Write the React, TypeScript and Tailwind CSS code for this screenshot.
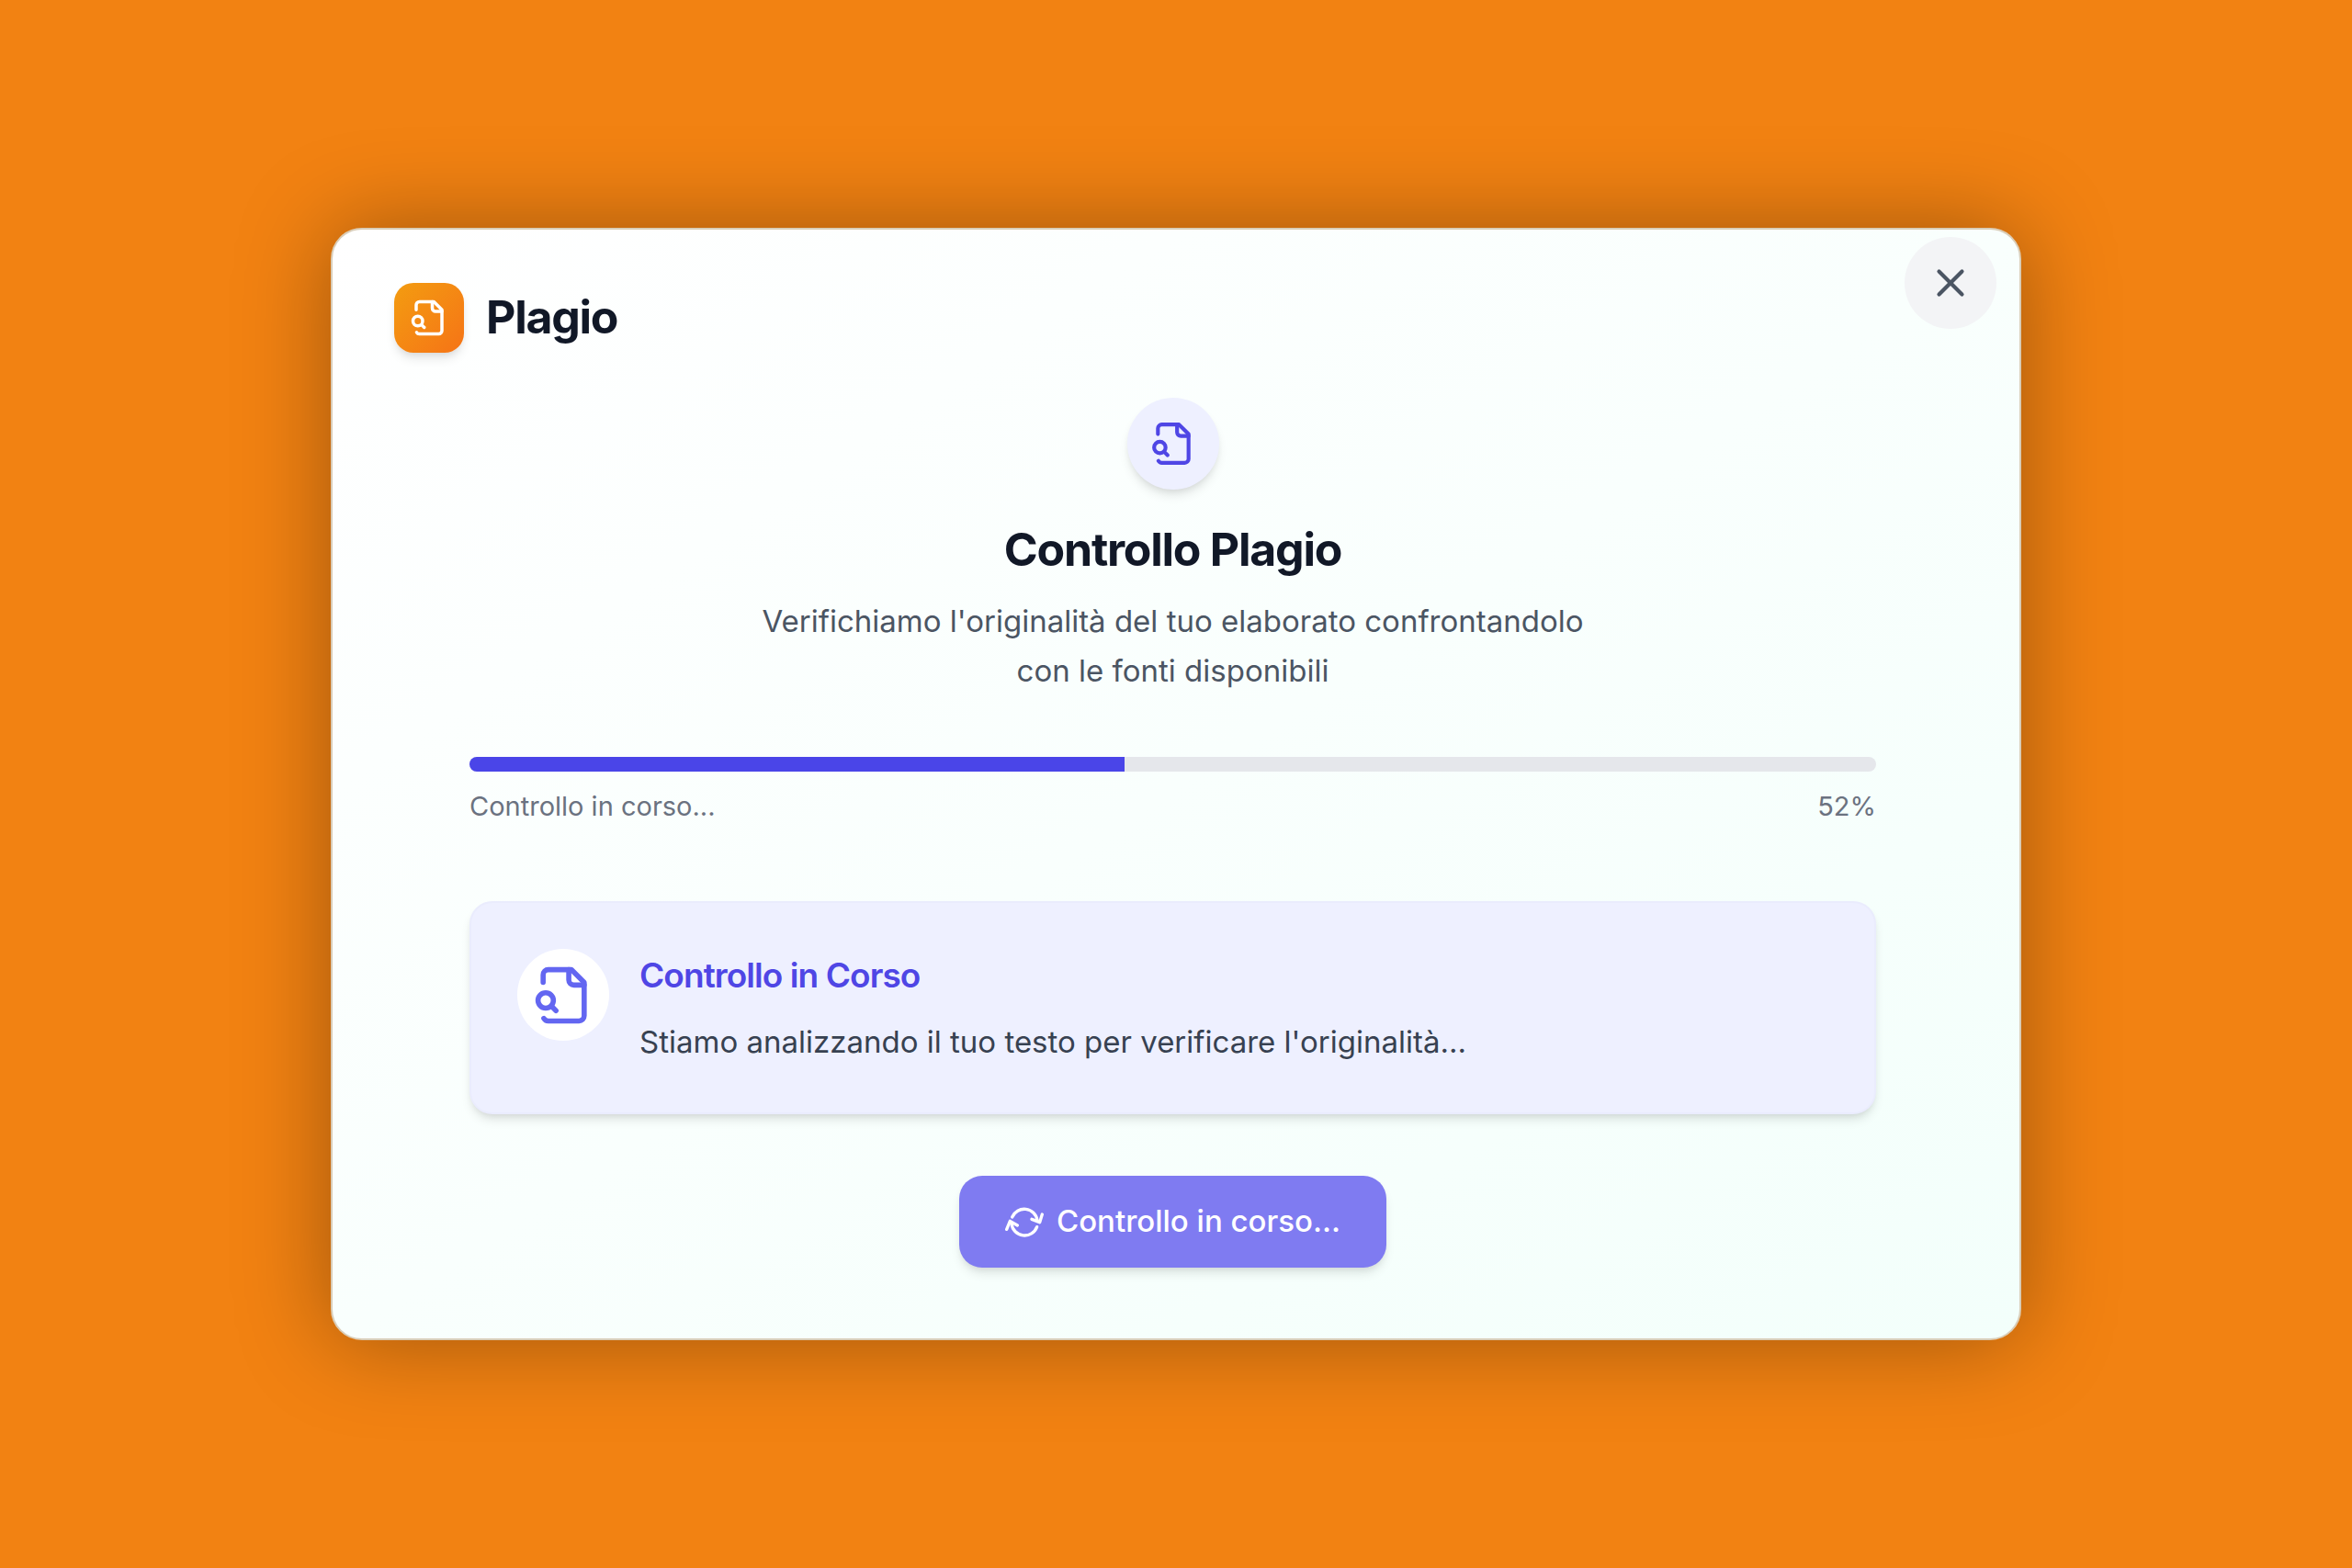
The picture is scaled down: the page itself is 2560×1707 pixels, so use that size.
import { type SVGProps } from 'react';
import { X } from 'lucide-react';

function FileSearchIcon(props: SVGProps<SVGSVGElement>) {
    return (
        <svg
            viewBox="0 0 24 24"
            fill="none"
            stroke="currentColor"
            strokeWidth={2}
            strokeLinecap="round"
            strokeLinejoin="round"
            aria-hidden="true"
            {...props}
        >
            <path d="M14 2v4a2 2 0 0 0 2 2h4" />
            <path d="M4.268 21a2 2 0 0 0 1.727 1H18a2 2 0 0 0 2-2V7l-5-5H6a2 2 0 0 0-2 2v3" />
            <path d="m9 18-1.5-1.5" />
            <circle cx="5" cy="14" r="3" />
        </svg>
    );
}

function SyncIcon(props: SVGProps<SVGSVGElement>) {
    return (
        <svg
            viewBox="0 0 126 126"
            fill="none"
            stroke="currentColor"
            strokeWidth={10}
            strokeLinecap="round"
            strokeLinejoin="round"
            aria-hidden="true"
            {...props}
        >
            <path d="M23 48A43 43 0 0 1 105 58" />
            <path d="M87 55l26 10 8-26" />
            <path d="M104 80A43 43 0 0 1 21 70" />
            <path d="M5 88l11-27 24 14" />
        </svg>
    );
}

interface ProgressProps {
    label: string;
    value: number;
    fill: number;
}

function Progress({ label, value, fill }: ProgressProps) {
    return (
        <div className="flex flex-col gap-4">
            <div
                role="progressbar"
                aria-label={label}
                aria-valuenow={value}
                aria-valuemin={0}
                aria-valuemax={100}
                className="h-4 overflow-hidden rounded-full bg-[#e5e7eb]"
            >
                <div
                    className="h-full bg-[#4a45e8]"
                    style={{ width: `${fill}%` }}
                />
            </div>
            <div className="flex items-center justify-between text-[29px] leading-[44px] text-[#6b7280]">
                <span>{label}</span>
                <span>{value}%</span>
            </div>
        </div>
    );
}

export default function App() {
    return (
        <div className="flex min-h-screen items-center justify-center bg-[#f28212] px-[360px] font-['Inter',sans-serif]">
            <section
                role="dialog"
                aria-labelledby="dialog-title"
                className="relative w-full rounded-[34px] border-2 border-[#d9cdb8] bg-linear-to-br from-white to-[#f3fffb] pt-[58px] pb-[77px] shadow-[0_0_100px_rgba(0,0,0,0.35)]"
            >
                <button
                    type="button"
                    aria-label="Chiudi"
                    className="absolute top-2 right-[25px] flex size-[100px] items-center justify-center rounded-full bg-[#f3f4f6] text-[#4b5563]"
                >
                    <X className="size-[50px]" strokeWidth={2} />
                </button>

                <header className="flex items-start gap-6 px-[67px]">
                    <div className="flex size-[76px] items-center justify-center rounded-[21px] bg-linear-to-br from-[#f39c10] to-[#f57316] text-white shadow-[0_8px_12px_-2px_rgba(0,0,0,0.1),0_4px_8px_-4px_rgba(0,0,0,0.1)]">
                        <FileSearchIcon className="size-[42px]" />
                    </div>
                    <h1
                        id="dialog-title"
                        className="text-[50px] leading-[74px] font-bold tracking-tight text-[#111827]"
                    >
                        Plagio
                    </h1>
                </header>

                <main className="mt-[49px] pr-[156px] pl-[149px]">
                    <div className="flex flex-col items-center text-center">
                        <div className="flex size-[100px] items-center justify-center rounded-full bg-[#eef0ff] text-[#4f46e5] shadow-[0_8px_12px_-2px_rgba(0,0,0,0.1),0_4px_8px_-4px_rgba(0,0,0,0.1)]">
                            <FileSearchIcon className="size-[50px]" />
                        </div>
                        <h2 className="mt-8 text-[50px] leading-[66px] font-bold tracking-tight text-[#111827]">
                            Controllo Plagio
                        </h2>
                        <p className="mt-[18px] max-w-[930px] text-[33px] leading-[54px] text-[#4b5563]">
                            Verifichiamo l'originalità del tuo elaborato
                            confrontandolo con le fonti disponibili
                        </p>
                    </div>

                    <div className="mt-[67px]">
                        <Progress
                            label="Controllo in corso..."
                            value={52}
                            fill={46.6}
                        />
                    </div>

                    <div className="mt-[81px] flex items-start gap-[33px] rounded-[25px] border-2 border-[#eaecfd] bg-[#eef0ff] p-[50px] shadow-[0_8px_12px_-2px_rgba(0,0,0,0.1),0_4px_8px_-4px_rgba(0,0,0,0.1)]">
                        <div className="flex size-[100px] shrink-0 items-center justify-center rounded-full bg-white text-[#6366f1]">
                            <FileSearchIcon className="size-[67px]" />
                        </div>
                        <div>
                            <h3 className="text-[37px] leading-[58px] font-semibold tracking-tight text-[#4f46e5]">
                                Controllo in Corso
                            </h3>
                            <p className="mt-4 text-[33px] leading-[54px] text-[#374151]">
                                Stiamo analizzando il tuo testo per verificare
                                l'originalità...
                            </p>
                        </div>
                    </div>

                    <div className="mt-[67px] flex justify-center">
                        <button
                            type="button"
                            className="flex h-[100px] items-center gap-3.5 rounded-[25px] bg-[#7f7bf1] px-[50px] text-[33px] font-medium text-white shadow-[0_8px_12px_-2px_rgba(0,0,0,0.1),0_4px_8px_-4px_rgba(0,0,0,0.1)]"
                        >
                            <SyncIcon className="size-[42px]" />
                            Controllo in corso...
                        </button>
                    </div>
                </main>
            </section>
        </div>
    );
}
